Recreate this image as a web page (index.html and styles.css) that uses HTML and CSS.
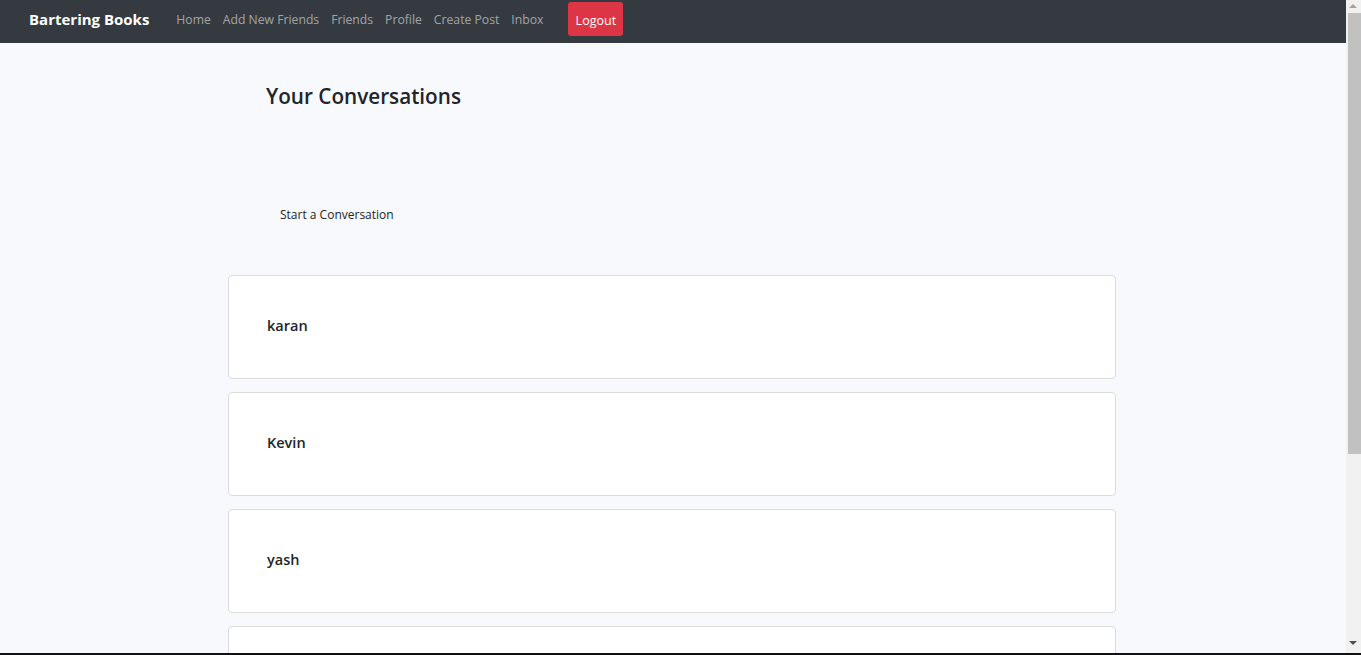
FILE: index.html
```html
<!DOCTYPE html>
<html lang="en">
<head>
<meta charset="utf-8">
<title>Inbox - Bartering Books</title>
<link rel="stylesheet" href="styles.css">
</head>
<body>
<nav class="navbar">
  <a class="brand" href="#">Bartering Books</a>
  <ul class="nav-links">
    <li><a href="#">Home</a></li>
    <li><a href="#">Add New Friends</a></li>
    <li><a href="#">Friends</a></li>
    <li><a href="#">Profile</a></li>
    <li><a href="#">Create Post</a></li>
    <li><a href="#">Inbox</a></li>
  </ul>
  <button class="logout" type="button">Logout</button>
</nav>
<main class="container">
  <h2 class="title">Your Conversations</h2>
  <div class="actions">
    <button class="start-btn" type="button">Start a Conversation</button>
  </div>
  <div class="conversations">
    <div class="card"><h5 class="card-name">karan</h5></div>
    <div class="card"><h5 class="card-name">Kevin</h5></div>
    <div class="card"><h5 class="card-name">yash</h5></div>
    <div class="card"><h5 class="card-name">rahul</h5></div>
  </div>
</main>
<div class="scrollbar" aria-hidden="true">
  <span class="arrow up"></span>
  <span class="thumb"></span>
  <span class="arrow down"></span>
</div>
<div class="bottom-edge" aria-hidden="true"></div>
</body>
</html>
```
FILE: styles.css
```css
* { box-sizing: border-box; }
html, body { margin: 0; padding: 0; }
html { background: #f8f9fd; }
body {
  margin-right: 15px;
  background: #f8f9fd;
  font-family: "Open Sans", "Noto Sans", sans-serif;
  color: #212529;
}
.navbar {
  height: 43px;
  background: #343a40;
  display: flex;
  align-items: center;
  padding: 0 0 0 29px;
}
.brand {
  color: #fff;
  font-weight: 700;
  font-size: 15px;
  text-decoration: none;
  margin-right: 27px;
  margin-top: -6px;
}
.nav-links {
  list-style: none;
  display: flex;
  gap: 12px;
  margin: -7px 0 0 0;
  padding: 0;
}
.nav-links a {
  color: rgba(255,255,255,0.55);
  text-decoration: none;
  font-size: 12.2px;
}
.logout {
  margin-left: 25px;
  margin-top: -5px;
  height: 34px;
  width: 55px;
  background: #dc3545;
  color: #fff;
  border: none;
  border-radius: 3px;
  font-family: inherit;
  font-size: 12.5px;
  padding: 2px 0 0 0;
}
.container {
  width: 890px;
  margin: 0 auto;
  padding: 0 2px 30px 0;
}
.title {
  margin: 0;
  padding: 39px 0 0 38px;
  font-size: 20.7px;
  font-weight: 600;
  line-height: 28px;
}
.actions {
  padding: 86px 0 0 37px;
}
.start-btn {
  background: #f8f9fc;
  border: none;
  font-family: inherit;
  font-size: 12px;
  color: #212529;
  padding: 10px 15px;
  border-radius: 3px;
}
.conversations {
  margin-top: 42px;
  display: flex;
  flex-direction: column;
  gap: 13px;
}
.card {
  background: #fff;
  border: 1px solid #dcdcdc;
  border-radius: 4px;
  height: 104px;
  padding: 0 0 4px 38px;
  display: flex;
  align-items: center;
}
.card-name {
  margin: 0;
  font-size: 14.5px;
  font-weight: 600;
  color: #212529;
}
.scrollbar {
  position: fixed;
  top: 0;
  right: 0;
  width: 15px;
  height: 653px;
  background: #f1f1f1;
}
.thumb {
  position: absolute;
  left: 2px;
  right: 0;
  top: 13px;
  height: 441px;
  background: #c1c1c1;
}
.arrow {
  position: absolute;
  left: 3px;
  width: 0;
  height: 0;
  border-left: 4px solid transparent;
  border-right: 4px solid transparent;
}
.arrow.up {
  top: 4px;
  border-bottom: 4px solid #a3a3a3;
}
.arrow.down {
  top: 641px;
  border-top: 4px solid #505050;
}
.bottom-edge {
  position: fixed;
  left: 0;
  right: 0;
  bottom: 0;
  height: 2px;
  background: #111;
}
```
